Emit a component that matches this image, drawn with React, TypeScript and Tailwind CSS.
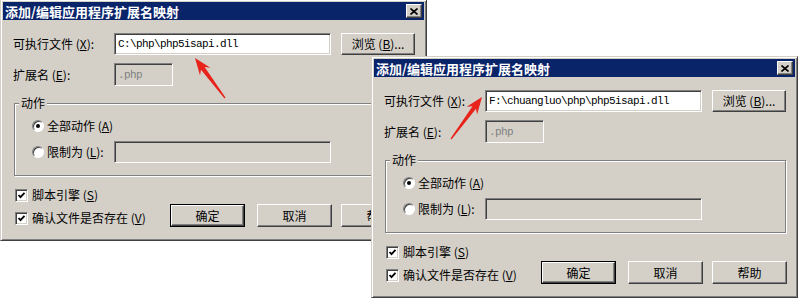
import React from 'react';

const sunken =
  'border border-t-[#808080] border-l-[#808080] border-b-white border-r-white shadow-[inset_1px_1px_0_#404040,inset_-1px_-1px_0_#d4d0c8]';
const raised =
  'border border-t-white border-l-white border-r-[#404040] border-b-[#404040] shadow-[inset_-1px_-1px_0_#808080,inset_1px_1px_0_#d4d0c8]';

function arrowPoints(tx: number, ty: number, hx: number, hy: number) {
  const dx = hx - tx;
  const dy = hy - ty;
  const len = Math.hypot(dx, dy);
  const ux = dx / len;
  const uy = dy / len;
  const nx = -uy;
  const ny = ux;
  const headLen = 17;
  const headW = 6.5;
  const neckW = 2.2;
  const tailW = 0.6;
  const bx = hx - ux * headLen;
  const by = hy - uy * headLen;
  const kx = hx - ux * (headLen - 4);
  const ky = hy - uy * (headLen - 4);
  const pts = [
    [tx + nx * tailW, ty + ny * tailW],
    [kx + nx * neckW, ky + ny * neckW],
    [bx + nx * headW, by + ny * headW],
    [hx, hy],
    [bx - nx * headW, by - ny * headW],
    [kx - nx * neckW, ky - ny * neckW],
    [tx - nx * tailW, ty - ny * tailW],
  ];
  return pts.map((p) => p.map((v) => v.toFixed(1)).join(',')).join(' ');
}

function CloseButton() {
  return (
    <div className={`w-[16px] h-[14px] bg-[#d4d0c8] flex items-center justify-center ${raised}`}>
      <svg width="8" height="7" viewBox="0 0 8 7">
        <path d="M0.5 0.5 L7.5 6.5 M7.5 0.5 L0.5 6.5" stroke="#000" strokeWidth="1.6" />
      </svg>
    </div>
  );
}

function Radio({ checked }: { checked?: boolean }) {
  return (
    <div className="w-[12px] h-[12px] rounded-full bg-white border border-t-[#808080] border-l-[#808080] border-r-white border-b-white shadow-[inset_1px_1px_0_#404040] flex items-center justify-center shrink-0">
      {checked && <div className="w-[4px] h-[4px] rounded-full bg-black" />}
    </div>
  );
}

function Check() {
  return (
    <div className={`w-[13px] h-[13px] bg-white flex items-center justify-center shrink-0 ${sunken}`}>
      <svg width="9" height="9" viewBox="0 0 9 9">
        <polyline points="1.5,4 3.5,6.2 7.5,1.8" fill="none" stroke="#000" strokeWidth="1.8" />
      </svg>
    </div>
  );
}

function Button({ label, isDefault }: { label: string; isDefault?: boolean }) {
  if (isDefault) {
    return (
      <div className="w-[75px] h-[23px] border border-black">
        <div className={`w-full h-full bg-[#d4d0c8] flex items-center justify-center ${raised}`}>{label}</div>
      </div>
    );
  }
  return (
    <div className={`w-[75px] h-[23px] bg-[#d4d0c8] flex items-center justify-center ${raised}`}>{label}</div>
  );
}

function Dialog({ path, className }: { path: string; className: string }) {
  return (
    <div
      className={`absolute w-[427px] h-[242px] bg-[#d4d0c8] border border-t-[#d4d0c8] border-l-[#d4d0c8] border-r-[#404040] border-b-[#404040] shadow-[inset_1px_1px_0_#fff,inset_-1px_-1px_0_#808080] p-[2px] ${className}`}
    >
      <div className="h-[18px] bg-[#0a246a] flex items-center justify-between pl-[2px] pr-[2px]">
        <span className="text-white font-bold text-[13px] leading-none">添加/编辑应用程序扩展名映射</span>
        <CloseButton />
      </div>

      <div className="pl-[10px] text-[12px] leading-[16px] text-black">
        <div className="mt-[13px] flex items-center h-[22px]">
          <div className="w-[101px]">
            可执行文件 (<u>X</u>):
          </div>
          <div className={`w-[217px] h-[22px] bg-white flex items-center pl-[3px] ${sunken}`}>
            <span className="font-['Liberation_Mono',monospace] text-[11px] tracking-[-0.6px]">{path}</span>
          </div>
          <div className={`ml-[10px] w-[74px] h-[22px] bg-[#d4d0c8] flex items-center justify-center ${raised}`}>
            浏览 (<u>B</u>)...
          </div>
        </div>

        <div className="mt-[8px] flex items-center h-[23px]">
          <div className="w-[101px]">
            扩展名 (<u>E</u>):
          </div>
          <div className={`w-[59px] h-[23px] bg-[#d4d0c8] flex items-center pl-[3px] ${sunken}`}>
            <span className="font-['Liberation_Mono',monospace] text-[11px] tracking-[-0.6px] text-[#808080]">.php</span>
          </div>
        </div>

        <fieldset className="mt-[9px] ml-[1px] w-[401px] h-[81px] border border-[#808080] shadow-[inset_1px_1px_0_#fff,1px_1px_0_#fff]">
          <legend className="ml-[4px] px-[2px] bg-[#d4d0c8]">动作</legend>
          <div className="pl-[17px]">
            <div className="mt-[7px] flex items-center h-[16px]">
              <Radio checked />
              <span className="ml-[3px]">
                全部动作 (<u>A</u>)
              </span>
            </div>
            <div className="mt-[7px] flex items-center h-[22px]">
              <div className="w-[82px] flex items-center">
                <Radio />
                <span className="ml-[3px]">
                  限制为 (<u>L</u>):
                </span>
              </div>
              <div className={`w-[217px] h-[22px] bg-[#d4d0c8] ${sunken}`} />
            </div>
          </div>
        </fieldset>

        <div className="mt-[10px] flex items-end">
          <div className="w-[157px] flex flex-col gap-[5px]">
            <div className="h-[18px] flex items-center pl-[2px]">
              <Check />
              <span className="ml-[4px]">
                脚本引擎 (<u>S</u>)
              </span>
            </div>
            <div className="h-[18px] flex items-center pl-[2px]">
              <Check />
              <span className="ml-[4px]">
                确认文件是否存在 (<u>V</u>)
              </span>
            </div>
          </div>
          <Button label="确定" isDefault />
          <div className="ml-[12px]">
            <Button label="取消" />
          </div>
          <div className="ml-[9px]">
            <Button label="帮助" />
          </div>
        </div>
      </div>
    </div>
  );
}

export default function App() {
  return (
    <div className="relative w-[800px] h-[300px] bg-white overflow-hidden font-['Noto_Sans_CJK_SC','Noto_Sans',sans-serif]">
      <Dialog path="C:\php\php5isapi.dll" className="left-0 top-[-1px]" />
      <Dialog path="F:\chuangluo\php\php5isapi.dll" className="left-[371px] top-[56px]" />
      <svg className="absolute inset-0 pointer-events-none" width="800" height="300" viewBox="0 0 800 300">
        <polygon points={arrowPoints(225, 98, 195, 58)} fill="#e8231b" />
        <polygon points={arrowPoints(451, 139, 482, 97)} fill="#e8231b" />
      </svg>
    </div>
  );
}
